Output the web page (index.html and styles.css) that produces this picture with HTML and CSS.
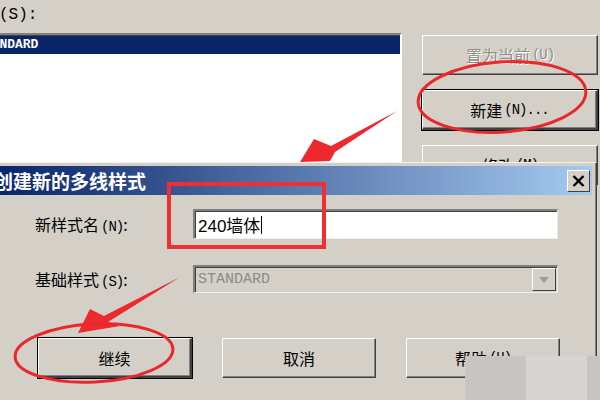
FILE: index.html
```html
<!DOCTYPE html>
<html lang="zh-CN">

<head>
  <meta charset="UTF-8">
  <title>创建新的多线样式</title>
  <link rel="stylesheet" href="styles.css">
</head>

<body>
  <div class="screen">
    <!-- parent window: multiline style list -->
    <div class="main">
      <div class="caption">样式(S):</div>
      <div class="main-row">
        <div class="listbox">
          <div class="list-item selected">STANDARD</div>
        </div>
        <div class="side">
          <div class="btn disabled">置为当前<span class="key">(U)</span></div>
          <div class="btn default">新建<span class="key">(N)...</span></div>
          <div class="btn">修改<span class="key">(M)</span></div>
        </div>
      </div>
    </div>

    <!-- modal dialog -->
    <div class="dialog">
      <div class="titlebar">
        <span class="title">创建新的多线样式</span>
        <span class="close">
          <svg width="13" height="12" viewBox="0 0 13 12">
            <path d="M1.5 1 L11.5 11 M11.5 1 L1.5 11" stroke="#000" stroke-width="2.4" fill="none"/>
          </svg>
        </span>
      </div>
      <div class="dialog-body">
        <div class="form">
          <label class="label">新样式名<span class="key">(N)</span>:</label>
          <div class="field">240墙体<span class="caret"></span></div>
          <label class="label">基础样式<span class="key">(S)</span>:</label>
          <div class="field select">
            <span class="select-text">STANDARD</span>
            <span class="drop">
              <svg width="10" height="6" viewBox="0 0 10 6"><path d="M0 0 H10 L5 6 Z" fill="#9a9a9a"/></svg>
            </span>
          </div>
        </div>
        <div class="actions">
          <div class="btn default">继续</div>
          <div class="btn">取消</div>
          <div class="btn">帮助<span class="key">(H)</span></div>
        </div>
      </div>
    </div>

    <!-- leftover watermark blocks -->
    <div class="patch patch-a"></div>
    <div class="patch patch-b"></div>
    <div class="patch patch-c"></div>

    <!-- red annotations -->
    <svg class="marks" width="600" height="400" viewBox="0 0 600 400">
      <ellipse cx="502" cy="97" rx="84" ry="35" transform="rotate(-4 502 97)" fill="none" stroke="#e8282c" stroke-width="3"/>
      <polygon points="300,162 314,139 331,146 397,111 335,152 330,161" fill="#ec2a2e"/>
      <rect x="169" y="184" width="155" height="63" fill="none" stroke="#ec3034" stroke-width="4"/>
      <polygon points="78,333 90,309 104,316 180,277 108,322 120,326" fill="#ec2a2e"/>
      <ellipse cx="94" cy="353" rx="79" ry="29" transform="rotate(-3 94 353)" fill="none" stroke="#e8282c" stroke-width="3"/>
    </svg>
  </div>
</body>

</html>
```

FILE: styles.css
```css
body {
  margin: 0;
  background: #d4d0c8;
  font-family: "Noto Sans CJK SC", "Liberation Sans", sans-serif;
  color: #000;
}

.screen {
  position: relative;
  width: 600px;
  height: 400px;
  overflow: hidden;
  background: #d4d0c8;
}

.key {
  font-family: "Liberation Mono", monospace;
  font-size: 14px;
  letter-spacing: -1px;
  margin-left: 2px;
}

/* parent window */
.caption {
  height: 33px;
  line-height: 30px;
  margin-left: -33px;
  font-size: 16px;
  font-family: "Liberation Mono", "Noto Sans CJK SC", monospace;
}

.main-row {
  display: flex;
}

.listbox {
  width: 426px;
  height: 140px;
  margin-left: -28px;
  background: #fff;
  border-top: 2px solid #808080;
  border-left: 2px solid #808080;
  border-right: 2px solid #fff;
  padding: 1px 0 0 0;
  box-shadow: inset 0 1px 0 #404040;
}

.list-item {
  height: 18px;
  line-height: 18px;
  padding-left: 2px;
  font-family: "Liberation Mono", monospace;
  font-size: 13px;
  font-weight: bold;
}

.list-item.selected {
  background: #0a246a;
  color: #fff;
}

.side {
  display: flex;
  flex-direction: column;
  gap: 15px;
  width: 176px;
  margin-left: 20px;
  padding-top: 2px;
}

/* classic buttons */
.btn {
  box-sizing: border-box;
  height: 40px;
  display: flex;
  align-items: center;
  justify-content: center;
  font-size: 16px;
  background: #d4d0c8;
  border-top: 1px solid #fff;
  border-left: 1px solid #fff;
  border-right: 1px solid #404040;
  border-bottom: 1px solid #404040;
  box-shadow: inset -1px -1px 0 #808080;
}

.btn.default {
  outline: 1px solid #000;
  outline-offset: 0;
  border-right: 2px solid #404040;
  border-bottom: 2px solid #404040;
}

.btn.disabled {
  color: #8f8d88;
  text-shadow: 1px 1px 0 #fff;
}

/* dialog */
.dialog {
  position: absolute;
  left: 0;
  top: 162px;
  width: 597px;
  height: 240px;
  box-sizing: border-box;
  background: #d4d0c8;
  border-top: 1px solid #f2f2f2;
  border-right: 1px solid #404040;
  box-shadow: inset -1px 0 0 #808080;
  padding-top: 3px;
}

.titlebar {
  height: 29px;
  margin-right: 4px;
  display: flex;
  align-items: center;
  justify-content: space-between;
  background: linear-gradient(to right, #0a246a, #a6caf0);
}

.title {
  margin-left: -6px;
  color: #fff;
  font-weight: bold;
  font-size: 19px;
}

.close {
  width: 23px;
  height: 22px;
  box-sizing: border-box;
  margin-right: 2px;
  display: flex;
  align-items: center;
  justify-content: center;
  background: #d4d0c8;
  border-top: 1px solid #fff;
  border-left: 1px solid #fff;
  border-right: 1px solid #404040;
  border-bottom: 1px solid #404040;
}

.dialog-body {
  padding: 14px 0 0 35px;
}

.form {
  display: grid;
  grid-template-columns: 158px 365px;
  grid-template-rows: 30px 28px;
  row-gap: 26px;
  align-items: center;
}

.label {
  font-size: 16px;
}

.field {
  box-sizing: border-box;
  height: 30px;
  display: flex;
  align-items: center;
  padding-left: 3px;
  background: #fff;
  border-top: 2px solid #808080;
  border-left: 2px solid #808080;
  border-bottom: 1px solid #eee;
  border-right: 1px solid #eee;
  box-shadow: inset 1px 1px 0 #404040;
  font-family: "Liberation Sans", "Noto Sans CJK SC", sans-serif;
  font-size: 17px;
}

.caret {
  width: 1px;
  height: 18px;
  margin-left: 1px;
  background: #000;
}

.field.select {
  height: 28px;
  background: #d4d0c8;
  justify-content: space-between;
  padding-right: 1px;
}

.select-text {
  font-family: "Liberation Mono", monospace;
  font-size: 15px;
  color: #8a8a8a;
}

.drop {
  width: 24px;
  height: 23px;
  box-sizing: border-box;
  display: flex;
  align-items: center;
  justify-content: center;
  border-top: 1px solid #fff;
  border-left: 1px solid #fff;
  border-right: 1px solid #404040;
  border-bottom: 1px solid #404040;
}

.actions {
  display: flex;
  gap: 30px;
  margin-top: 45px;
  padding-left: 3px;
}

.actions .btn {
  width: 154px;
}

/* bottom right blocks */
.patch {
  position: absolute;
  top: 356px;
  height: 44px;
}

.patch-a {
  left: 465px;
  width: 61px;
  background: #c6c5c1;
}

.patch-b {
  left: 526px;
  width: 61px;
  background: #d6d5d1;
}

.patch-c {
  left: 587px;
  width: 13px;
  background: #c6c5c1;
}

.marks {
  position: absolute;
  left: 0;
  top: 0;
  pointer-events: none;
}
```
